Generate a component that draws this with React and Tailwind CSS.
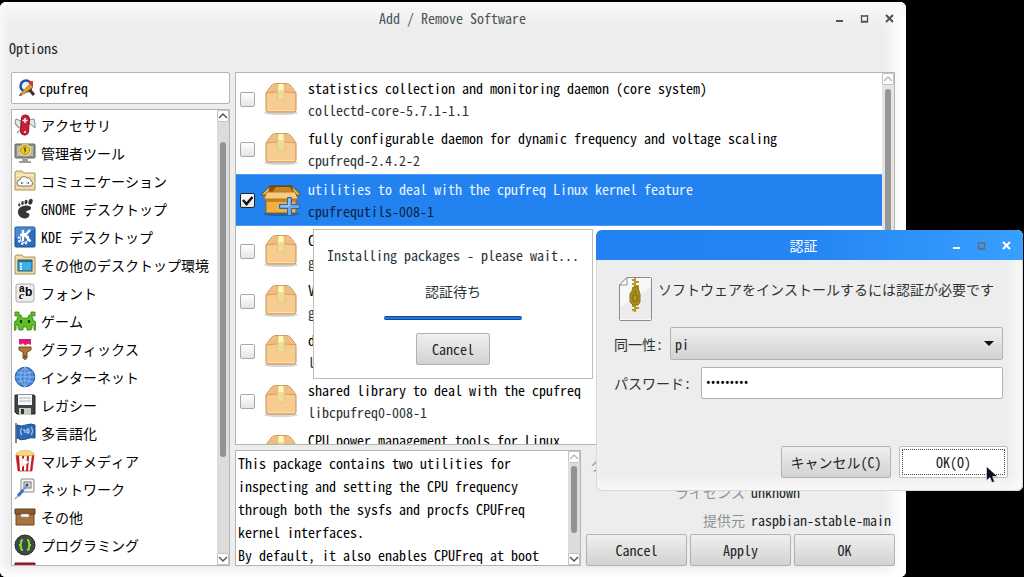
import React from 'react'

const icons = {
    knife: (
        <>
            <path d="M7 7L2 5l-1 3 1 3 5 4zM15 6l5-1 1 5v4l-6-5z" fill="#e8e8e8" stroke="#888" strokeWidth="1" />
            <path d="M7 15l-4 4M5 14l-4-5" stroke="#999" strokeWidth="1.200" />
            <rect x="7" y="1" width="8" height="20" rx="4" transform="rotate(4 11 11)" fill="#c8203a" stroke="#8a1024" />
            <path d="M11 4v5M8.500 6.500h5" stroke="#fff" strokeWidth="1.500" />
            <circle cx="11" cy="18" r="1" fill="#eee" />
        </>
    ),
    admin: (
        <>
            <rect x="1" y="2" width="20" height="14" rx="1" fill="#8c9088" stroke="#62665e" />
            <rect x="3" y="4" width="16" height="10" fill="#b8bcb0" />
            <circle cx="11" cy="8" r="6" fill="#f4f0d0" stroke="#d8c858" strokeWidth="1" />
            <circle cx="11" cy="8" r="4.500" fill="#f0cc20" stroke="#a88c10" />
            <path d="M9.500 6h2.500l-2 2h2l-1.500 2.500" fill="none" stroke="#333" />
            <path d="M8 17h6v2H8zM5 19h12v2H5z" fill="#9a9e96" />
        </>
    ),
    cloud: (
        <>
            <path d="M1 20V3l1-2h6l2 2h11v17z" fill="#f0dca0" stroke="#a89460" />
            <path d="M2 5h18" stroke="#fff4cc" />
            <path d="M6 16a3 3 0 0 1 0-6 4 4 0 0 1 7-2 3.500 3.500 0 0 1 4 3 2.600 2.600 0 0 1-1 5z" fill="#fff" stroke="#777" />
            <path d="M7 13h2.500M12.500 13H15M8 12l-1 1 1 1M14 12l1 1-1 1" stroke="#555" fill="none" strokeWidth=".8" />
        </>
    ),
    gnome: (
        <>
            <path d="M12 7.500c6-.5 6.500 4 2.500 5-3 .7-3 2-.5 2.500 3 1 1 5.500-3 5.500-5 0-7.500-4-7-7.500.6-3.500 4-5.200 8-5.500z" fill="#333638" />
            <ellipse cx="16.500" cy="3.800" rx="2" ry="3" transform="rotate(20 16.500 3.800)" fill="#333638" />
            <ellipse cx="12" cy="4" rx="1.500" ry="2.200" transform="rotate(10 12 4)" fill="#333638" />
            <ellipse cx="8.500" cy="5" rx="1.300" ry="1.900" fill="#333638" />
            <ellipse cx="5.300" cy="6.800" rx="1.100" ry="1.600" fill="#333638" />
        </>
    ),
    kde: (
        <>
            <rect x="1" y="1" width="20" height="20" rx="1" fill="#2c6cc0" stroke="#164c98" />
            <path d="M1.500 12L21 3V1.500H1.500z" fill="#4a88d4" />
            <circle cx="9.500" cy="13" r="5" fill="none" stroke="#fff" strokeWidth="2" strokeDasharray="2.200 1.700" />
            <circle cx="10" cy="12.500" r="4" fill="none" stroke="#fff" />
            <path d="M9 4v11M16 4l-5 5.500 5.500 6" stroke="#fff" strokeWidth="2.400" fill="none" />
        </>
    ),
    desktop: (
        <>
            <path d="M1 20V3l1-2h6l2 2h11v17z" fill="#f0dca0" stroke="#a89460" />
            <rect x="4" y="6" width="14" height="11" fill="#38b0e8" stroke="#285878" />
            <path d="M4 7h14" stroke="#285878" strokeWidth="1.500" />
            <path d="M6 10h2M6 12.500h2M6 15h2" stroke="#fff" strokeWidth="1.500" />
        </>
    ),
    font: (
        <>
            <rect x="2" y="2" width="18" height="18" rx="2" fill="#eee" stroke="#aaa" />
            <text x="5" y="10" fontSize="10" fontWeight="bold" fontFamily="Liberation Sans, sans-serif">a</text>
            <text x="11" y="14" fontSize="12" fontWeight="bold" fontFamily="Liberation Sans, sans-serif">b</text>
            <text x="5" y="17" fontSize="11" fontStyle="italic" fontWeight="bold" fontFamily="Liberation Serif, serif">c</text>
        </>
    ),
    game: (
        <>
            <path d="M1 2h4v3h2l1 3h6l1-3h2V2h4v4h-3v2h1v3h2l1 3v6h-2v-5h-2v3l-1 2h-4v-3H9v3H5l-1-2v-3H2v5H0v-6l1-3h2V8h1V6H1z" fill="#60c020" stroke="#347c10" strokeWidth=".8" />
            <path d="M6 10h2v3H6zM14 10h2v3h-2z" fill="#163808" />
        </>
    ),
    brush: (
        <>
            <path d="M5 1h12v8H5z" fill="#e01878" />
            <path d="M5 6l2 1 2-1.500 2 2 3-1.500 3 1v3H5z" fill="#fff" stroke="#ddd" strokeWidth=".5" />
            <path d="M5 9h12v3l-4 2v6q-2 3-4 0v-6l-4-2z" fill="#b07838" stroke="#704818" />
            <circle cx="11" cy="18.500" r=".9" fill="#503010" />
        </>
    ),
    globe: (
        <>
            <circle cx="11" cy="11" r="9.800" fill="#4888d8" stroke="#2458a0" />
            <path d="M11 1v20M1 11h20M3 6q8 3 16 0M3 16q8-3 16 0M11 1q-10 10 0 20M11 1q10 10 0 20" fill="none" stroke="#9cc4f0" strokeWidth=".8" />
        </>
    ),
    floppy: (
        <>
            <path d="M2 1h18l1 1v18H3l-2-2V1z" fill="#3c4448" stroke="#22282a" />
            <path d="M4 1h14v10H4z" fill="#f4f8fa" />
            <path d="M5 4h12M5 7h12" stroke="#a8b8c0" />
            <path d="M5 14h12v7H5z" fill="#c8ccc4" />
            <path d="M7 15h3v5H7z" fill="#333" />
        </>
    ),
    flag: (
        <>
            <path d="M2 1v20" stroke="#888" strokeWidth="2" />
            <path d="M3 3q4 2 9 0t9 0v13q-4-1-9 1t-9-1z" fill="#2c68b8" stroke="#1c4c90" />
            <path d="M8 6q-3 4 0 7M17 5q3 4 0 8" stroke="#a0c4ec" fill="none" strokeWidth="1.200" />
            <path d="M9 8h2v3M13 7h2v4h-2z" stroke="#c8e0f8" fill="none" />
        </>
    ),
    popcorn: (
        <>
            <path d="M2 5h18l-2 16H4z" fill="#fff" stroke="#a01010" strokeWidth=".6" />
            <path d="M2 5h3l1 16H4zM8 5h2v16H8zM13 5h2l-1 16h-2zM18 5h2l-2 16h-2z" fill="#c81820" />
            <path d="M2 5q0-3 3-3 1-2 4-1 2-1 4 0 3-1 4 1 3 0 3 3-9 2-18 0z" fill="#f8dc80" stroke="#d0a040" strokeWidth=".6" />
            <path d="M8 8l7 4-7 5z" fill="#fff" stroke="#bbb" strokeWidth=".5" />
        </>
    ),
    net: (
        <>
            <rect x="7" y="1" width="13" height="13" rx="1" fill="#f4f4f4" stroke="#888" />
            <rect x="10" y="4" width="7" height="6" fill="#ddd" stroke="#777" />
            <circle cx="13" cy="7" r="1.500" fill="#345" />
            <path d="M13 8l-5 5" stroke="#6c9cd4" strokeWidth="2" />
            <path d="M9 12l-5 6" stroke="#3c74c0" strokeWidth="3" />
            <path d="M4 18l-3 3" stroke="#99aabb" strokeWidth="1.500" />
        </>
    ),
    drawer: (
        <>
            <path d="M2 7h18v12H2z" fill="#a87440" stroke="#6c4820" />
            <path d="M1 3h20v5H1z" fill="#8c5c30" stroke="#5c3c18" />
            <path d="M7 8h8v3H7z" fill="#fff" stroke="#999" strokeWidth=".6" />
        </>
    ),
    code: (
        <>
            <circle cx="11" cy="11" r="10" fill="#404848" stroke="#252a2a" />
            <path d="M9 6q-2 0-2 2v1.500q0 1.500-2 1.500 2 0 2 1.500V14q0 2 2 2M13 6q2 0 2 2v1.500q0 1.500 2 1.500-2 0-2 1.500V14q0 2-2 2" fill="none" stroke="#80ec20" strokeWidth="1.800" />
        </>
    ),
    red: <path d="M1 1h20v18H1z" fill="#b81838" stroke="#701020" />,
}

const categories = [
    ['knife', 'アクセサリ'],
    ['admin', '管理者ツール'],
    ['cloud', 'コミュニケーション'],
    ['gnome', 'GNOME デスクトップ'],
    ['kde', 'KDE デスクトップ'],
    ['desktop', 'その他のデスクトップ環境'],
    ['font', 'フォント'],
    ['game', 'ゲーム'],
    ['brush', 'グラフィックス'],
    ['globe', 'インターネット'],
    ['floppy', 'レガシー'],
    ['flag', '多言語化'],
    ['popcorn', 'マルチメディア'],
    ['net', 'ネットワーク'],
    ['drawer', 'その他'],
    ['code', 'プログラミング'],
    ['red', ''],
]

const packages = [
    { title: 'statistics collection and monitoring daemon (core system)', name: 'collectd-core-5.7.1-1.1' },
    { title: 'fully configurable daemon for dynamic frequency and voltage scaling', name: 'cpufreqd-2.4.2-2' },
    { title: 'utilities to deal with the cpufreq Linux kernel feature', name: 'cpufrequtils-008-1', selected: true },
    { title: 'CPU frequency plugin for GKrellM', name: 'gkrellm-cpufreq' },
    { title: 'Visual CPU frequency and load monitor gui', name: 'gkrellm-x86info' },
    { title: 'development files for the cpufreq driver', name: 'libcpufreq-dev' },
    { title: 'shared library to deal with the cpufreq', name: 'libcpufreq0-008-1' },
    { title: 'CPU power management tools for Linux', name: 'linux-cpupower' },
]

const buttonStyle = 'rounded-xs border border-[#b2b2ae] bg-linear-to-b from-[#f0f0f0] to-[#d2d2d0] text-[#1c2628]'

function BoxIcon() {
    return (
        <svg viewBox="0 0 36 34" className="h-[34px] w-9 shrink-0" aria-hidden="true">
            <ellipse cx="18" cy="31" rx="17" ry="2" fill="#000" opacity=".16" />
            <path d="M3 11L8 4q2-2.500 5-2.500h10q3 0 5 2.500l5 7v17q0 2-2 2H5q-2 0-2-2z" fill="#f6cc90" stroke="#c89050" />
            <path d="M4 11l5-6q2-2.500 4-2.500h10q2 0 4 2.500l5 6q-14-3-28 0z" fill="#f0bc80" />
            <path d="M4 11q14-3 28 0" stroke="#d89c60" fill="none" />
            <path d="M4.500 28.500h27" stroke="#ffe0a8" />
            <path d="M14.500 2h7v16h-7z" fill="#f0dc98" stroke="#dcc078" strokeWidth=".7" />
            <path d="M16 2h4l.5 6h-5z" fill="#fff8b8" />
        </svg>
    )
}

function OpenBoxIcon() {
    return (
        <svg viewBox="0 0 42 34" className="-mx-[3px] h-[34px] w-[42px] shrink-0" aria-hidden="true">
            <ellipse cx="21" cy="31" rx="18" ry="2" fill="#000" opacity=".25" />
            <path d="M6 13h30v16q0 1-1 1H7q-1 0-1-1z" fill="#f0b040" stroke="#98600c" />
            <path d="M6 14h30v5H6z" fill="#c88020" />
            <path d="M10 3h22l4 8H6z" fill="#8c5408" stroke="#603800" />
            <path d="M16 4h14l3 6H12z" fill="#c88828" />
            <path d="M10 3l-9 9h4l4-3zM32 3l9 9h-4l-4-3z" fill="#e8b058" stroke="#805010" />
            <path d="M7 9h28l3 7H4z" fill="#f8cc80" stroke="#b07820" />
            <path d="M27.500 14.500h4v7h8v4h-8v7h-4v-7h-8v-4h8z" fill="#6ca8e8" stroke="#2c64a8" />
            <path d="M29 16v7h-8" stroke="#b8dcff" fill="none" />
        </svg>
    )
}

function ScrollButton({ down, faint, label }) {
    return (
        <button aria-label={label} className={`flex size-3 shrink-0 items-center justify-center rounded-xs border border-[#c4c4c0] bg-white ${faint ? 'text-[#bbb]' : 'text-[#555]'}`}>
            <svg viewBox="0 0 10 10" className={`size-[10px] ${down ? 'rotate-180' : ''}`} fill="none" stroke="currentColor" strokeWidth="1.500">
                <path d="M1 7l4-4 4 4" />
            </svg>
        </button>
    )
}

function WindowButtons({ dim }) {
    return (
        <div className="flex items-center gap-4">
            <button aria-label="Minimize" className="flex h-4 w-[9px] items-center">
                <svg viewBox="0 0 9 9" className="w-[9px]"><path d="M1 7h7" stroke="currentColor" strokeWidth="2" /></svg>
            </button>
            <button aria-label="Maximize" className={`flex h-4 w-[9px] items-center ${dim ? 'text-[#6c6c6c]' : ''}`}>
                <svg viewBox="0 0 9 9" className="w-[9px]"><path d="M1.500 1v7h6V1M1 2h7M1 7.500h7" fill="none" stroke="currentColor" strokeWidth="1.300" /></svg>
            </button>
            <button aria-label="Close" className="flex h-4 w-[9px] items-center">
                <svg viewBox="0 0 9 9" className="w-[9px]"><path d="M1 1l7 7M8 1L1 8" stroke="currentColor" strokeWidth="2" /></svg>
            </button>
        </div>
    )
}

function Categories() {
    return (
        <div className="flex min-h-0 flex-1 border border-[#b4b4b0] bg-white">
            <ul className="min-w-0 flex-1 overflow-hidden pt-px">
                {categories.map(([icon, label]) => (
                    <li key={icon} className="flex h-7 items-center gap-[5px] whitespace-nowrap pl-[2px]">
                        <svg viewBox="0 0 22 22" className="size-[22px] shrink-0" aria-hidden="true">{icons[icon]}</svg>
                        <span>{label}</span>
                    </li>
                ))}
            </ul>
            <div className="flex w-3 flex-col items-center bg-[#dcdcdc]">
                <ScrollButton label="Scroll categories up" />
                <div className="my-5 min-h-0 w-[6px] flex-1 pb-[76px]">
                    <div className="h-full rounded-full bg-[#929292]" />
                </div>
                <ScrollButton down label="Scroll categories down" />
            </div>
        </div>
    )
}

function PackageRow({ title, name, selected }) {
    return (
        <li>
            <label className={`flex items-center whitespace-nowrap pl-[4px] ${selected ? 'h-[52px] border-y border-[#4c9cf4] bg-[#2283f0]' : 'h-[50px]'}`}>
                <span className="grid size-[15px] shrink-0">
                    <input type="checkbox" defaultChecked={selected} className="peer col-start-1 row-start-1 size-[15px] appearance-none rounded-xs border border-[#a8a8a4] bg-linear-to-b from-white to-[#e4e4e4] checked:border-[#222] checked:bg-white" />
                    <svg viewBox="0 0 15 15" className="pointer-events-none col-start-1 row-start-1 hidden size-[15px] peer-checked:block"><path d="M3 7l3.500 4L12.500 4" fill="none" stroke="#111" strokeWidth="2.500" /></svg>
                </span>
                <span className="ml-[8px] mr-[9px] flex">{selected ? <OpenBoxIcon /> : <BoxIcon />}</span>
                <span className="flex flex-col pb-px leading-[22px]">
                    <span className={selected ? 'text-[#eef5ff]' : 'font-medium text-black'}>{title}</span>
                    <span className={selected ? 'text-[#0c2340]' : 'text-[#2c3438]'}>{name}</span>
                </span>
            </label>
        </li>
    )
}

function Packages() {
    return (
        <div className="flex min-h-0 flex-1 border border-[#b4b4b0] bg-white">
            <ul className="min-w-0 flex-1 overflow-hidden pt-px">
                {packages.map((p) => <PackageRow key={p.name} {...p} />)}
            </ul>
            <div className="flex w-3 flex-col items-center gap-1 bg-[#e4e4e4]">
                <ScrollButton faint label="Scroll packages up" />
                <div className="w-[6px] flex-1 rounded-full bg-[#969696]" />
                <ScrollButton down label="Scroll packages down" />
            </div>
        </div>
    )
}

function Details() {
    return (
        <div className="flex h-[116px] gap-[5px]">
            <div className="flex w-[346px] border border-[#b4b4b0] bg-white">
                <p className="min-w-0 flex-1 overflow-hidden whitespace-nowrap pl-[2px] pt-px font-medium leading-[23px] text-black">
                    This package contains two utilities for<br />
                    inspecting and setting the CPU frequency<br />
                    through both the sysfs and procfs CPUFreq<br />
                    kernel interfaces.<br />
                    By default, it also enables CPUFreq at boot
                </p>
                <div className="flex w-3 flex-col items-center bg-[#dcdcdc]">
                    <ScrollButton faint label="Scroll description up" />
                    <div className="mb-5 mt-[3px] w-[6px] flex-1 rounded-full bg-[#929292]" />
                    <ScrollButton down label="Scroll description down" />
                </div>
            </div>
            <div className="flex min-w-0 flex-1 flex-col justify-between">
                <dl className="grid grid-cols-[1fr_144px] gap-x-[6px] whitespace-nowrap leading-7">
                    <dt className="text-right text-[#8c9496]">ダウンロード時のサイズ</dt>
                    <dd className="font-medium">40.4 KB</dd>
                    <dt className="text-right text-[#8c9496]">ライセンス</dt>
                    <dd className="font-medium">unknown</dd>
                    <dt className="text-right text-[#8c9496]">提供元</dt>
                    <dd className="font-medium">raspbian-stable-main</dd>
                </dl>
                <div className="grid grid-cols-3 gap-[3px]">
                    <button className={`h-8 font-medium ${buttonStyle}`}>Cancel</button>
                    <button className={`h-8 font-medium ${buttonStyle}`}>Apply</button>
                    <button className={`h-8 font-medium ${buttonStyle}`}>OK</button>
                </div>
            </div>
        </div>
    )
}

function ProgressDialog() {
    return (
        <section className="absolute left-[313px] top-[229px] flex h-[150px] w-[280px] flex-col items-center border border-[#bebeb8] bg-white pt-[13px] text-[#2c3438]">
            <p className="whitespace-nowrap leading-6">Installing packages - please wait...</p>
            <p className="mt-3 leading-6">認証待ち</p>
            <div role="progressbar" aria-label="認証待ち" className="mt-[13px] h-[4px] w-[138px] rounded-xs border-y border-[#0c4c9c] bg-[#2078e0]" />
            <button className={`mt-[13px] h-8 w-[74px] ${buttonStyle}`}>Cancel</button>
        </section>
    )
}

function ZipIcon() {
    return (
        <svg viewBox="0 0 33 44" className="h-11 w-[33px] shrink-0" aria-hidden="true">
            <path d="M8 .5h23.500q1 0 1 1v41q0 1-1 1h-30q-1 0-1-1V8z" fill="#f8f8f8" stroke="#8c8c8c" />
            <path d="M1 30L32 10v32H1z" fill="#ececec" />
            <path d="M8 .5V8H.5z" fill="#fff" stroke="#8c8c8c" />
            <path d="M16 1v34M13 3h4M16 5h4M13 7h4M16 9h4M13 29h4M16 31h4M13 33h4" stroke="#b89820" strokeWidth="1.800" />
            <path d="M14 10h5l1 4 1 3v8l-2 3h-5l-3-3v-8l2-3z" fill="#a88c20" stroke="#8c7414" />
            <path d="M14 15h4M14 18v6h4v-6z" fill="#b89c30" stroke="#806808" />
        </svg>
    )
}

function AuthDialog() {
    return (
        <section className="absolute right-[1px] top-[230px] w-[427px] rounded-md bg-[#ededed] text-[#2c3438] shadow-[inset_0_0_0_1px_#d8d8d8,inset_-6px_-6px_12px_2px_#fafafa]">
            <header className="grid h-[30px] grid-cols-[1fr_auto_1fr] items-center rounded-t-md bg-linear-to-r from-[#2081f2] via-[#2485f4] to-[#38a0ff] pr-3 text-white">
                <span />
                <h2>認証</h2>
                <div className="flex justify-end"><WindowButtons dim /></div>
            </header>
            <form onSubmit={(e) => e.preventDefault()} className="flex flex-col pb-[13px] pl-[18px] pr-[15px] pt-[17px]">
                <div className="flex gap-[6px] pl-[5px]">
                    <ZipIcon />
                    <p className="whitespace-nowrap leading-6">ソフトウェアをインストールするには認証が必要です</p>
                </div>
                <div className="mr-[5px] mt-[6px] flex items-center">
                    <label htmlFor="identity" className="w-14 whitespace-nowrap">同一性:</label>
                    <div className="grid min-w-0 flex-1 items-center">
                        <select id="identity" className={`col-start-1 row-start-1 h-[33px] w-full appearance-none px-1 ${buttonStyle}`}>
                            <option>pi</option>
                        </select>
                        <svg viewBox="0 0 10 5" className="pointer-events-none col-start-1 row-start-1 mr-[9px] h-[5px] w-[10px] justify-self-end"><path d="M0 0h10L5 5z" fill="#111" /></svg>
                    </div>
                </div>
                <div className="mr-[5px] mt-[7px] flex items-center">
                    <label htmlFor="password" className="w-[87px] whitespace-nowrap">パスワード:</label>
                    <input id="password" type="password" defaultValue="raspberry" className="h-8 min-w-0 flex-1 rounded-xs border border-[#b2b2ae] bg-white px-1 font-['Roboto',sans-serif] text-black" />
                </div>
                <div className="mt-[47px] flex justify-end gap-2">
                    <button type="button" className={`h-8 w-[110px] ${buttonStyle}`}>キャンセル(C)</button>
                    <button type="submit" className="h-8 w-[109px] rounded-xs border border-[#bcbcb8] bg-white p-[2px] text-[#1c2628]">
                        <span className="flex h-full items-center justify-center border border-dotted border-[#444]">OK(O)</span>
                    </button>
                </div>
            </form>
        </section>
    )
}

export default function App() {
    return (
        <div className="relative h-screen overflow-hidden bg-black pt-[2px] font-['Noto_Sans_Mono_CJK_JP','Noto_Sans_CJK_JP',monospace] text-[14px] leading-5">
            <main className="mr-[118px] flex h-full flex-col rounded-md bg-[#ededed] px-[11px] pb-[11px] text-[#1c2628] shadow-[inset_0_30px_16px_-16px_#f8f8f8,inset_-20px_0_14px_-6px_#fff,inset_8px_0_8px_-4px_#fafafa,inset_0_-10px_8px_-4px_#fff]">
                <header className="grid h-8 grid-cols-[1fr_auto_1fr] items-center pr-px text-[#4c5458]">
                    <span />
                    <h1>Add / Remove Software</h1>
                    <div className="flex justify-end"><WindowButtons /></div>
                </header>
                <nav className="-ml-[2px] flex h-[38px] items-start pt-1">
                    <button>Options</button>
                </nav>
                <div className="flex min-h-0 flex-1 gap-[5px]">
                    <aside className="flex w-[219px] flex-col gap-[5px] text-black">
                        <label className="flex h-8 shrink-0 items-center gap-[3px] rounded-xs border border-[#b4b4b0] bg-white pl-[6px]">
                            <svg viewBox="0 0 18 18" className="size-[18px] shrink-0" aria-hidden="true">
                                <circle cx="8" cy="7" r="5.500" fill="#e8eef8" stroke="#2450a0" strokeWidth="2.500" />
                                <path d="M11 2h4v5h-3z" fill="#e03030" />
                                <path d="M10 9l6 7" stroke="#333" strokeWidth="3" />
                                <path d="M2 15L12 5l3 3-9 7z" fill="#f09830" stroke="#a05c10" strokeWidth=".6" />
                                <path d="M2 15l3 1-4 1z" fill="#222" />
                            </svg>
                            <input type="text" aria-label="Search" defaultValue="cpufreq" className="min-w-0 flex-1 font-medium outline-none" />
                        </label>
                        <Categories />
                    </aside>
                    <div className="flex min-w-0 flex-1 flex-col gap-[5px]">
                        <Packages />
                        <Details />
                    </div>
                </div>
            </main>
            <ProgressDialog />
            <AuthDialog />
            <svg viewBox="0 0 12 18" className="absolute left-[986px] top-[466px] h-[18px] w-3" aria-hidden="true">
                <path d="M.5.500v14l3.500-3 2 5 2.500-1-2-5h5z" fill="#0c0c24" stroke="#fff" strokeWidth=".5" />
            </svg>
        </div>
    )
}
